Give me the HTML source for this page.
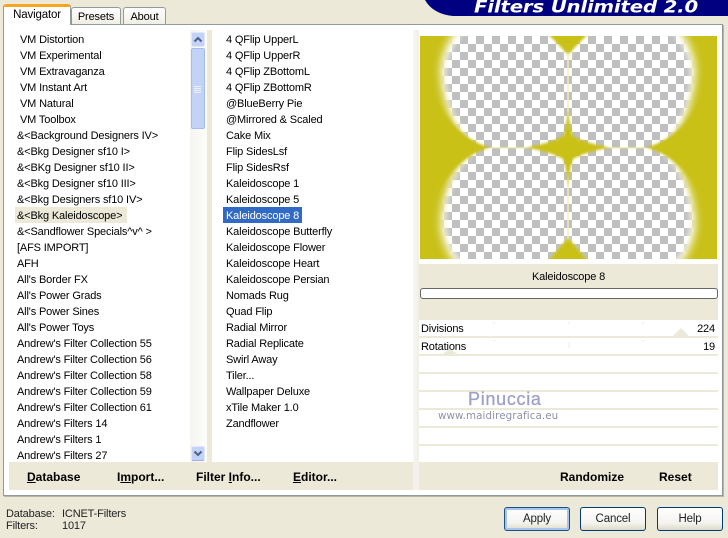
<!DOCTYPE html>
<html><head><meta charset="utf-8">
<style>
html,body{margin:0;padding:0}
body{width:728px;height:538px;overflow:hidden;background:#ece9d8;position:relative;font-family:"Liberation Sans",sans-serif;font-size:11px;letter-spacing:-.15px;color:#000}
div{position:absolute;box-sizing:border-box}
.t{white-space:nowrap;line-height:16px;height:16px;margin-top:1px}
.b{font-weight:bold;font-size:12px;letter-spacing:0;white-space:nowrap;line-height:16px;top:469px}
.b u{text-decoration:underline}
.line{left:419px;width:299px;height:2px;background:#ece9d8}
.btn{top:507px;width:66px;height:24px;border:1px solid #003c74;border-radius:3px;background:linear-gradient(#fff,#f4f3ee 70%,#dcd8c8);text-align:center;line-height:23px;font-size:11.5px;color:#222}
</style></head><body>
<svg style="position:absolute;left:425px;top:0" width="303" height="16"><path d="M0 0H303V16H28Q8 14 0 0Z" fill="#000080"/><text x="49" y="12.5" font-family="'DejaVu Sans',sans-serif" font-weight="bold" font-style="italic" font-size="16.5" fill="#fff" textLength="224" lengthAdjust="spacingAndGlyphs">Filters Unlimited 2.0</text></svg>

<div style="left:3px;top:24px;width:720px;height:472px;background:#fff;border:1px solid #919b9c;border-right-color:#8c9494;box-shadow:1px 1px 0 #b8b5a4"></div>

<div style="left:71px;top:7px;width:50px;height:18px;background:linear-gradient(#fff,#f0eee4);border:1px solid #919b9c;border-bottom:1px solid #919b9c;border-radius:3px 3px 0 0;text-align:center;line-height:18px;font-size:11px">Presets</div>
<div style="left:123px;top:7px;width:43px;height:18px;background:linear-gradient(#fff,#f0eee4);border:1px solid #919b9c;border-radius:3px 3px 0 0;text-align:center;line-height:18px;font-size:11px">About</div>
<div style="left:3px;top:4px;width:68px;height:21px;background:#fff;border:1px solid #919b9c;border-top:3px solid #f6a623;border-bottom:none;border-radius:3px 3px 0 0;text-align:center;line-height:16px;font-size:11.5px">Navigator</div>

<!-- list 1 -->
<div style="left:15px;top:207px;width:112px;height:16px;background:#ece9d8"></div>
<div class="t" style="left:20px;top:31px">VM Distortion</div>
<div class="t" style="left:20px;top:47px">VM Experimental</div>
<div class="t" style="left:20px;top:63px">VM Extravaganza</div>
<div class="t" style="left:20px;top:79px">VM Instant Art</div>
<div class="t" style="left:20px;top:95px">VM Natural</div>
<div class="t" style="left:20px;top:111px">VM Toolbox</div>
<div class="t" style="left:17px;top:127px">&amp;&lt;Background Designers IV&gt;</div>
<div class="t" style="left:17px;top:143px">&amp;&lt;Bkg Designer sf10 I&gt;</div>
<div class="t" style="left:17px;top:159px">&amp;&lt;BKg Designer sf10 II&gt;</div>
<div class="t" style="left:17px;top:175px">&amp;&lt;Bkg Designer sf10 III&gt;</div>
<div class="t" style="left:17px;top:191px">&amp;&lt;Bkg Designers sf10 IV&gt;</div>
<div class="t" style="left:17px;top:207px">&amp;&lt;Bkg Kaleidoscope&gt;</div>
<div class="t" style="left:17px;top:223px">&amp;&lt;Sandflower Specials^v^ &gt;</div>
<div class="t" style="left:17px;top:239px">[AFS IMPORT]</div>
<div class="t" style="left:17px;top:255px">AFH</div>
<div class="t" style="left:17px;top:271px">All's Border FX</div>
<div class="t" style="left:17px;top:287px">All's Power Grads</div>
<div class="t" style="left:17px;top:303px">All's Power Sines</div>
<div class="t" style="left:17px;top:319px">All's Power Toys</div>
<div class="t" style="left:17px;top:335px">Andrew's Filter Collection 55</div>
<div class="t" style="left:17px;top:351px">Andrew's Filter Collection 56</div>
<div class="t" style="left:17px;top:367px">Andrew's Filter Collection 58</div>
<div class="t" style="left:17px;top:383px">Andrew's Filter Collection 59</div>
<div class="t" style="left:17px;top:399px">Andrew's Filter Collection 61</div>
<div class="t" style="left:17px;top:415px">Andrew's Filters 14</div>
<div class="t" style="left:17px;top:431px">Andrew's Filters 1</div>
<div class="t" style="left:17px;top:447px">Andrew's Filters 27</div>

<!-- scrollbar -->
<div style="left:190px;top:30px;width:17px;height:432px;background:linear-gradient(90deg,#f5f4ee,#fdfdfb)"></div>
<div style="left:207px;top:30px;width:5px;height:432px;background:#ece9d8"></div>
<div style="left:191px;top:32px;width:14px;height:15px;background:#c3d3f8;border:1px solid #dfe8fc;border-radius:2px"></div>
<svg style="position:absolute;left:191px;top:32px" width="14" height="15"><path d="M3.500 9.500L7 6L10.500 9.500" fill="none" stroke="#4d6185" stroke-width="2"/></svg>
<div style="left:191px;top:48px;width:14px;height:81px;background:#c3d3f8;border:1px solid #a5bcee;border-radius:2px"></div>
<div style="left:194px;top:86px;width:7px;height:1px;background:#eef3fe;box-shadow:0 2px 0 #eef3fe,0 4px 0 #eef3fe,0 6px 0 #eef3fe"></div>
<div style="left:191px;top:446px;width:14px;height:15px;background:#c3d3f8;border:1px solid #dfe8fc;border-bottom-color:#98b1e4;border-radius:2px"></div>
<svg style="position:absolute;left:191px;top:446px" width="14" height="15"><path d="M3.500 5.500L7 9L10.500 5.500" fill="none" stroke="#4d6185" stroke-width="2"/></svg>

<!-- list 2 -->
<div style="left:223px;top:207px;width:79px;height:16px;background:#316ac5"></div>
<div class="t" style="left:226px;top:31px">4 QFlip UpperL</div>
<div class="t" style="left:226px;top:47px">4 QFlip UpperR</div>
<div class="t" style="left:226px;top:63px">4 QFlip ZBottomL</div>
<div class="t" style="left:226px;top:79px">4 QFlip ZBottomR</div>
<div class="t" style="left:226px;top:95px">@BlueBerry Pie</div>
<div class="t" style="left:226px;top:111px">@Mirrored &amp; Scaled</div>
<div class="t" style="left:226px;top:127px">Cake Mix</div>
<div class="t" style="left:226px;top:143px">Flip SidesLsf</div>
<div class="t" style="left:226px;top:159px">Flip SidesRsf</div>
<div class="t" style="left:226px;top:175px">Kaleidoscope 1</div>
<div class="t" style="left:226px;top:191px">Kaleidoscope 5</div>
<div class="t" style="left:226px;top:207px;color:#fff">Kaleidoscope 8</div>
<div class="t" style="left:226px;top:223px">Kaleidoscope Butterfly</div>
<div class="t" style="left:226px;top:239px">Kaleidoscope Flower</div>
<div class="t" style="left:226px;top:255px">Kaleidoscope Heart</div>
<div class="t" style="left:226px;top:271px">Kaleidoscope Persian</div>
<div class="t" style="left:226px;top:287px">Nomads Rug</div>
<div class="t" style="left:226px;top:303px">Quad Flip</div>
<div class="t" style="left:226px;top:319px">Radial Mirror</div>
<div class="t" style="left:226px;top:335px">Radial Replicate</div>
<div class="t" style="left:226px;top:351px">Swirl Away</div>
<div class="t" style="left:226px;top:367px">Tiler...</div>
<div class="t" style="left:226px;top:383px">Wallpaper Deluxe</div>
<div class="t" style="left:226px;top:399px">xTile Maker 1.0</div>
<div class="t" style="left:226px;top:415px">Zandflower</div>

<div style="left:413px;top:30px;width:6px;height:432px;background:linear-gradient(90deg,#f8f7f3,#f0eee5)"></div>

<!-- preview -->
<svg style="position:absolute;left:420px;top:36px" width="297" height="223" viewBox="420 36 297 223">
<defs>
<pattern id="ck" x="420" y="36" width="16" height="16" patternUnits="userSpaceOnUse">
<rect x="0" y="0" width="16" height="16" fill="#fff"/>
<rect x="8" y="0" width="8" height="8" fill="#bfbfbf"/>
<rect x="0" y="8" width="8" height="8" fill="#bfbfbf"/>
</pattern>
<filter id="bl" x="-20%" y="-20%" width="140%" height="140%"><feGaussianBlur stdDeviation="3"/></filter>
<filter id="bh" x="-20%" y="-20%" width="140%" height="140%"><feGaussianBlur stdDeviation="4.500"/></filter>
<filter id="b1" x="-30%" y="-30%" width="160%" height="160%"><feGaussianBlur stdDeviation="1.200"/></filter>
<g id="blobs">
<path d="M462 26H548Q560 38 568 56V148H476Q456 130 448 106Q442 88 442 70Q444 46 462 26Z"/>
<path d="M674 26H588Q576 38 568 56V148H660Q680 130 688 106Q694 88 694 70Q692 46 674 26Z"/>
<path d="M476 147H568V239Q560 257 548 269H462Q444 249 442 225Q442 207 448 189Q456 165 476 147Z"/>
<path d="M660 147H568V239Q576 257 588 269H674Q692 249 694 225Q694 207 688 189Q680 165 660 147Z"/>
</g>
<mask id="m" maskUnits="userSpaceOnUse" x="420" y="36" width="297" height="223">
<use href="#blobs" fill="#fff" filter="url(#bl)" transform="translate(568 147.500) scale(.975) translate(-568 -147.500)"/>
</mask>
<mask id="m2" maskUnits="userSpaceOnUse" x="420" y="36" width="297" height="223">
<use href="#blobs" fill="#fff" filter="url(#bh)" transform="translate(568 147.500) scale(1.01) translate(-568 -147.500)"/>
</mask>
</defs>
<rect x="420" y="36" width="297" height="223" fill="#c9c118"/>
<rect x="420" y="36" width="297" height="223" fill="#fff" mask="url(#m2)"/>
<rect x="420" y="36" width="297" height="223" fill="url(#ck)" mask="url(#m)"/>
<rect x="567" y="48" width="2" height="200" fill="#f4f0b8" opacity=".7"/>
<rect x="490" y="147" width="156" height="1.500" fill="#eee9a0" opacity=".8"/>
<path d="M436 100Q456 138 490 147.500Q456 157 436 195Z" fill="#c9c118" filter="url(#b1)"/>
<path d="M701 100Q681 138 646 147.500Q681 157 701 195Z" fill="#c9c118" filter="url(#b1)"/>
<path d="M568 108Q570 130 573 136Q585 143 610 147.500Q585 152 573 159Q570 165 568 187Q566 165 563 159Q551 152 526 147.500Q551 143 563 136Q566 130 568 108Z" fill="#c9c118" filter="url(#b1)"/>
<path d="M546 32H590L568 54Z" fill="#c9c118" filter="url(#b1)"/>
<path d="M546 263H590L568 238Z" fill="#c9c118" filter="url(#b1)"/>
</svg>

<!-- right panel -->
<div style="left:419px;top:264px;width:299px;height:56px;background:#ece9d8"></div>
<div class="t" style="left:419px;width:299px;top:268px;text-align:center">Kaleidoscope 8</div>
<div style="left:420px;top:288px;width:298px;height:11px;background:#fff;border:1px solid #666;border-radius:3px"></div>
<div class="line" style="top:336px"></div>
<div class="line" style="top:354px"></div>
<div class="line" style="top:372px"></div>
<div class="line" style="top:390px"></div>
<div class="line" style="top:408px"></div>
<div class="line" style="top:426px"></div>
<div class="line" style="top:444px"></div>
<div class="t" style="left:421px;top:320px">Divisions</div>
<div class="t" style="left:421px;top:338px">Rotations</div>
<div class="t" style="right:13px;top:320px">224</div>
<div class="t" style="right:13px;top:338px">19</div>
<svg style="position:absolute;left:419px;top:320px" width="299" height="36"><path d="M253 17L262 8L271 17Z" fill="#ece9d8"/><path d="M22 35L31 29L40 35Z" fill="#ece9d8"/><path d="M150 2V4M150 22V28M75 2V4M75 20V22M224 2V4M224 20V22" stroke="#eeecdf" fill="none"/></svg>

<div class="t" style="left:468px;top:388px;font-size:18px;line-height:20px;height:20px;color:#9da0c6;letter-spacing:.7px;-webkit-text-stroke:.3px #9da0c6">Pinuccia</div>
<div class="t" style="left:438px;top:407px;font-size:10.3px;color:#8f91ab;letter-spacing:.1px;font-family:'DejaVu Sans',sans-serif">www.maidiregrafica.eu</div>

<!-- bottom toolbar -->
<div style="left:9px;top:462px;width:709px;height:28px;background:#ece9d8"></div>
<div style="left:413px;top:462px;width:6px;height:28px;background:#f3f1ea"></div>
<div class="b" style="left:27px"><u>D</u>atabase</div>
<div class="b" style="left:117px">I<u>m</u>port...</div>
<div class="b" style="left:196px">Filter <u>I</u>nfo...</div>
<div class="b" style="left:293px"><u>E</u>ditor...</div>
<div class="b" style="left:560px">Randomize</div>
<div class="b" style="left:659px">Reset</div>

<!-- status -->
<div class="t" style="left:6px;top:505px;color:#222">Database:</div>
<div class="t" style="left:62px;top:505px;color:#222">ICNET-Filters</div>
<div class="t" style="left:6px;top:517px;color:#222">Filters:</div>
<div class="t" style="left:62px;top:517px;color:#222">1017</div>

<div class="btn" style="left:504px;border-color:#1c5180;box-shadow:inset 0 0 0 2px #a9c4ec">Apply</div>
<div class="btn" style="left:580px">Cancel</div>
<div class="btn" style="left:657px">Help</div>
</body></html>
